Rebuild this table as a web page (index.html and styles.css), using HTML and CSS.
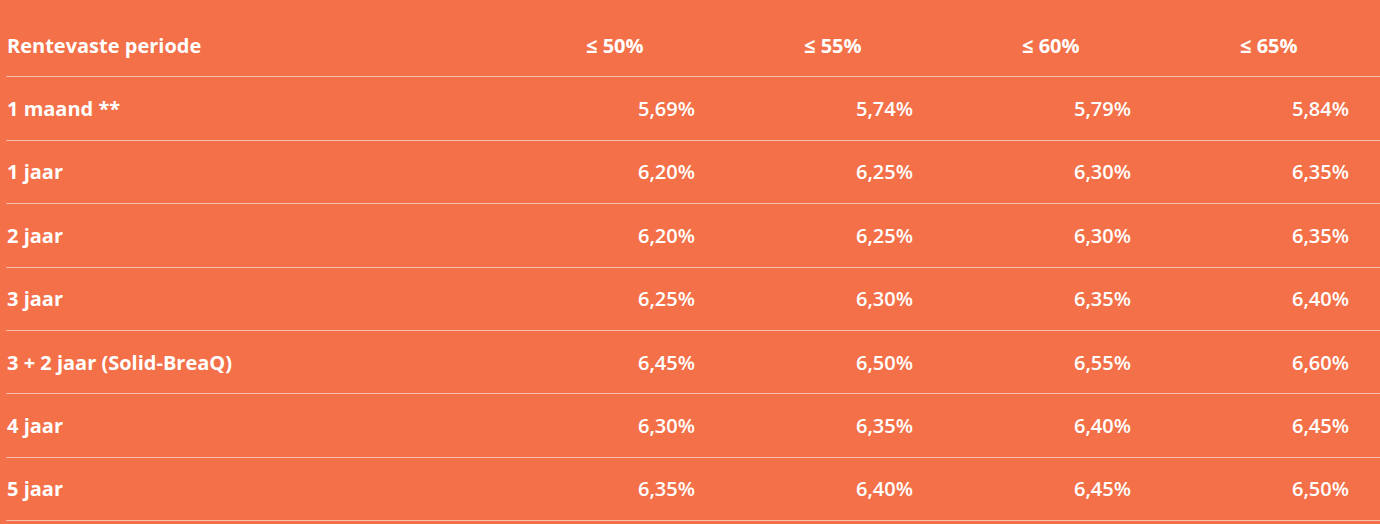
FILE: index.html
```html
<!DOCTYPE html>
<html lang="nl">
<head>
<meta charset="utf-8">
<title>Rentetarieven</title>
<link rel="stylesheet" href="styles.css">
</head>
<body>
<div class="rates">
  <div class="row head">
    <div class="label">Rentevaste periode</div>
    <div class="h">≤ 50%</div>
    <div class="h">≤ 55%</div>
    <div class="h">≤ 60%</div>
    <div class="h">≤ 65%</div>
  </div>
  <div class="row">
    <div class="label">1 maand **</div>
    <div class="v">5,69%</div><div class="v">5,74%</div><div class="v">5,79%</div><div class="v">5,84%</div>
  </div>
  <div class="row">
    <div class="label">1 jaar</div>
    <div class="v">6,20%</div><div class="v">6,25%</div><div class="v">6,30%</div><div class="v">6,35%</div>
  </div>
  <div class="row">
    <div class="label">2 jaar</div>
    <div class="v">6,20%</div><div class="v">6,25%</div><div class="v">6,30%</div><div class="v">6,35%</div>
  </div>
  <div class="row">
    <div class="label">3 jaar</div>
    <div class="v">6,25%</div><div class="v">6,30%</div><div class="v">6,35%</div><div class="v">6,40%</div>
  </div>
  <div class="row">
    <div class="label">3 + 2 jaar (Solid-BreaQ)</div>
    <div class="v">6,45%</div><div class="v">6,50%</div><div class="v">6,55%</div><div class="v">6,60%</div>
  </div>
  <div class="row">
    <div class="label">4 jaar</div>
    <div class="v">6,30%</div><div class="v">6,35%</div><div class="v">6,40%</div><div class="v">6,45%</div>
  </div>
  <div class="row">
    <div class="label">5 jaar</div>
    <div class="v">6,35%</div><div class="v">6,40%</div><div class="v">6,45%</div><div class="v">6,50%</div>
  </div>
</div>
</body>
</html>
```
FILE: styles.css
```css
html, body {
  margin: 0;
  padding: 0;
  background: #f47048;
}
body {
  padding: 14px 0 0 6px;
  font-family: "Open Sans", "Liberation Sans", sans-serif;
  color: #ffffff;
  font-size: 20px;
}
.rates {
  display: flex;
  flex-direction: column;
}
.row {
  box-sizing: border-box;
  display: grid;
  grid-template-columns: 1fr repeat(4, 218px);
  align-items: center;
  height: 63.4px;
  border-bottom: 1px solid rgba(255, 255, 255, 0.55);
}
.label {
  font-weight: 700;
  padding-left: 1px;
}
.h {
  font-weight: 700;
  padding-left: 78px;
}
.v {
  font-weight: 600;
  text-align: right;
  padding-right: 31px;
}
```
